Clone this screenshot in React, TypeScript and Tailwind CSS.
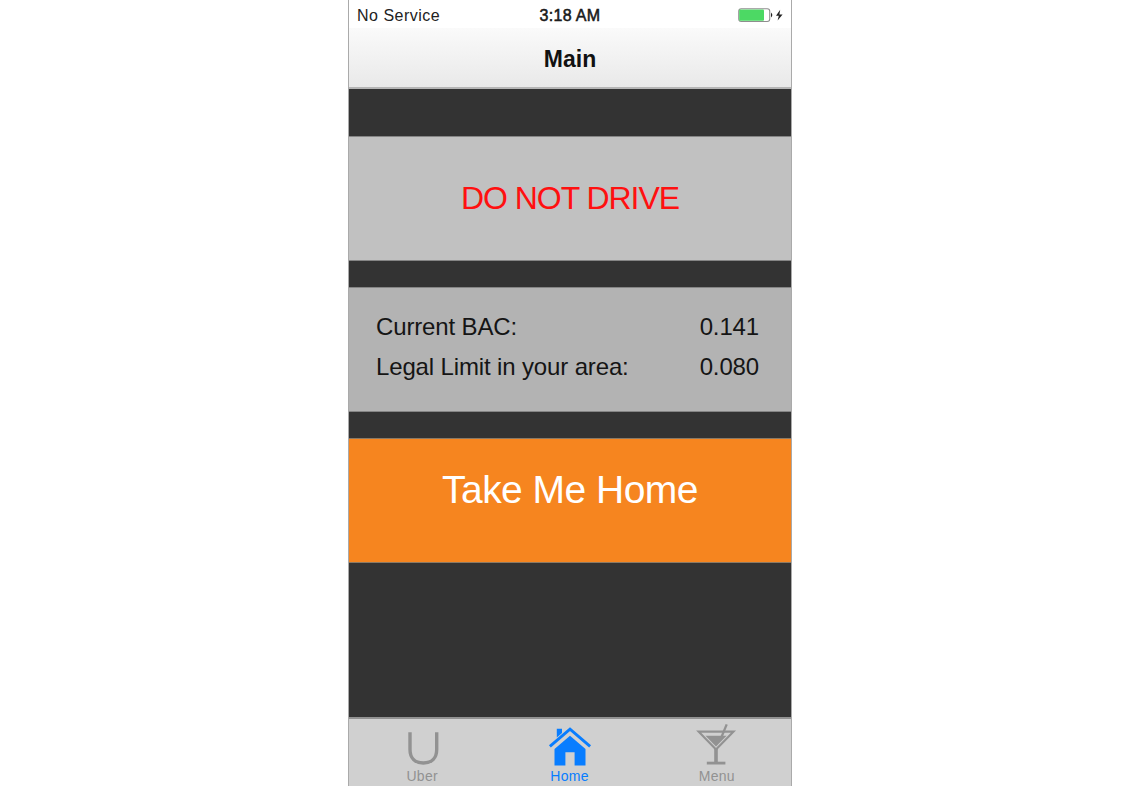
function StatusBar() {
  return (
    <div className="grid h-7 grid-cols-3 items-center bg-white text-[16px] leading-7 text-[#222]">
      <span className="pt-0.5 pl-2 tracking-[0.5px]">No Service</span>
      <span className="pt-0.5 text-center tracking-[0.3px] [-webkit-text-stroke:0.5px_#111]">3:18 AM</span>
      <svg className="mr-[7px] ml-auto" width="46" height="16" viewBox="0 0 46 16">
        <rect x="0.75" y="1.7" width="31" height="12.8" rx="2.5" fill="#fff" stroke="#8e8e8e" strokeWidth="1.1" />
        <rect x="1.2" y="2.5" width="24.8" height="11.2" rx="1" fill="#4cd964" />
        <path d="M33 5.5Q35.6 8 33 10.5Z" fill="#222" />
        <path d="M42.2 2.7L38 8.7H40.8L39.6 13.4L44.6 7.4H41.4Z" fill="#222" />
      </svg>
    </div>
  );
}

function Reading({ label, value }: { label: string; value: string }) {
  return (
    <div className="flex h-10 items-center justify-between text-2xl tracking-[-0.14px] text-[#151515]">
      <span>{label}</span>
      <span>{value}</span>
    </div>
  );
}

function UberIcon() {
  return (
    <svg width="44" height="47" viewBox="0 0 44 47" className="block">
      <path d="M9 13.3V30.5C9 39 14 44 22.3 44S35.7 39 35.7 30.5V13.3" fill="none" stroke="#929292" strokeWidth="3.4" />
    </svg>
  );
}

function HomeIcon() {
  return (
    <svg width="44" height="47" viewBox="0 0 44 47" className="block" fill="#087dff">
      <path d="M8.8 9.8H14V14L8.8 18.5Z" />
      <path d="M1.9 27.3L22 10.2L42.1 27.3" fill="none" stroke="#087dff" strokeWidth="2.9" />
      <path d="M22 16.8L37.5 30V46.5H26.6V33.3H17.4V46.5H6.5V30Z" />
    </svg>
  );
}

function DrinkIcon() {
  return (
    <svg width="44" height="47" viewBox="0 0 44 47" className="block" fill="none" stroke="#929292">
      <path d="M3.7 12.7H38.4L21 30.4Z" strokeWidth="2.2" />
      <path d="M10.5 16.8H31.6L21 27.6Z" fill="#929292" stroke="none" />
      <path d="M21 29V43.5" strokeWidth="3.6" />
      <path d="M11.8 44.1H30.4" strokeWidth="2.8" />
      <path d="M26.3 18.5L31.7 5.4" strokeWidth="2.3" />
    </svg>
  );
}

export default function App() {
  return (
    <div className="flex h-[786px] w-full justify-center overflow-hidden bg-white font-['Liberation_Sans',Arial,sans-serif]">
      <main className="flex h-full w-[444px] flex-col border-x border-[#aaa] bg-[#333]">
        <StatusBar />
        <header className="flex h-[61px] items-center justify-center border-b-2 border-[#b5b5b5] bg-linear-to-b from-[#fafafa] to-[#e9e9e9] text-[23px] font-bold text-[#111]">
          <h1 className="pt-[3px]">Main</h1>
        </header>
        <section className="mt-[47px] flex h-[125px] items-center justify-center border-y border-[#858585] bg-[#c1c1c1] pb-0.5 text-[32px] tracking-[-1.05px] text-[#ff1010]">
          DO NOT DRIVE
        </section>
        <section className="mt-[26px] h-[125px] border-y border-[#858585] bg-[#b3b3b3] pt-[19px] pr-8 pl-[27px]">
          <Reading label="Current BAC:" value="0.141" />
          <Reading label="Legal Limit in your area:" value="0.080" />
        </section>
        <button className="mt-[26px] flex h-[125px] w-full justify-center border-y border-[#8b7a65] bg-[#f6851f] pt-[29px] text-[39px] leading-[44px] tracking-[-0.52px] text-white">
          Take Me Home
        </button>
        <nav className="mt-auto grid h-[69px] grid-cols-3 border-t-2 border-[#929292] bg-[#d0d0d0] text-[14px] leading-4 tracking-[0.3px] text-[#929292]">
          <a className="flex flex-col items-center gap-0.5">
            <UberIcon />
            <span className="pr-px">Uber</span>
          </a>
          <a className="flex flex-col items-center gap-0.5 text-[#087dff]">
            <HomeIcon />
            <span className="pr-px">Home</span>
          </a>
          <a className="flex flex-col items-center gap-0.5">
            <DrinkIcon />
            <span className="pr-px">Menu</span>
          </a>
        </nav>
      </main>
    </div>
  );
}
